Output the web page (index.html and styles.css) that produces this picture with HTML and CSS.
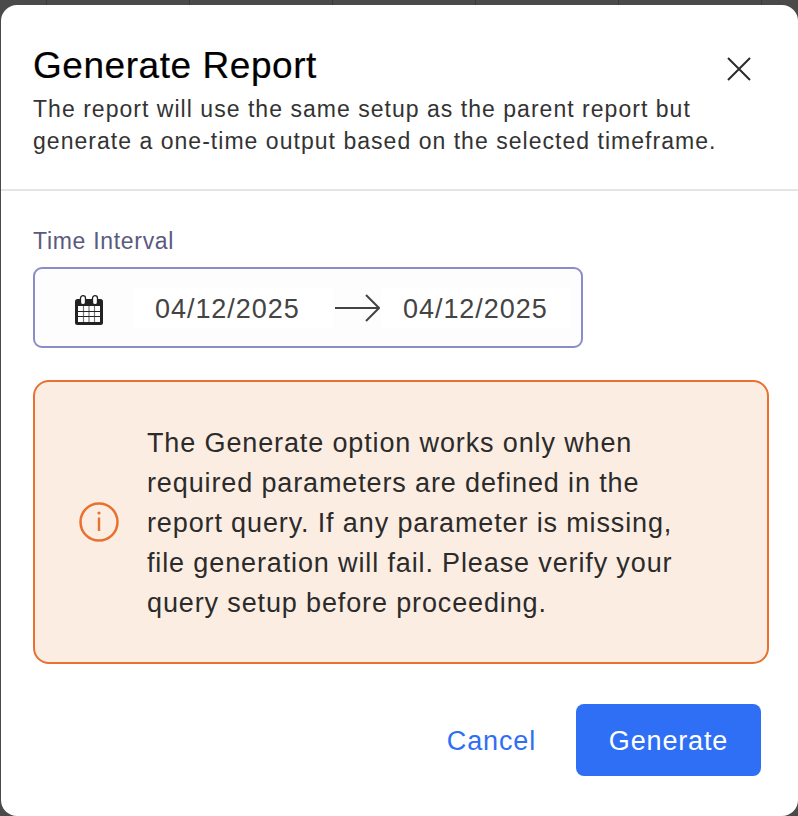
FILE: index.html
```html
<!DOCTYPE html>
<html>
    <head>
    <meta charset="utf-8">
    <title>Generate Report</title>
    <link rel="stylesheet" href="styles.css">
    </head>

    <body>
        <!-- table columns of the page behind the dialog -->
        <div class="backdrop">
            <span></span><span></span><span></span><span></span><span></span><span></span>
        </div>

        <div class="modal">
            <div class="modal-head">
                <div class="head-text">
                    <h1>Generate Report</h1>
                    <p>The report will use the same setup as the parent report but generate a one-time output based on the selected timeframe.</p>
                </div>
                <svg class="close" width="26" height="26" viewBox="0 0 26 26">
                    <path d="M2 2L24 24M24 2L2 24" stroke="#2b2b2b" stroke-width="2" fill="none"/>
                </svg>
            </div>

            <div class="modal-body">
                <label class="field-label">Time Interval</label>
                <div class="range">
                    <svg class="cal" width="28" height="30" viewBox="0 0 28 30">
                        <rect x="0" y="4" width="28" height="26" rx="2.500" fill="#222"/>
                        <rect x="5.500" y="0.700" width="5" height="9" rx="2.500" fill="#fff" stroke="#222" stroke-width="1.300"/>
                        <rect x="17.500" y="0.700" width="5" height="9" rx="2.500" fill="#fff" stroke="#222" stroke-width="1.300"/>
                        <rect x="3" y="11" width="22" height="16" fill="#fff"/>
                        <path d="M8.500 11V27M14 11V27M19.500 11V27" stroke="#777" stroke-width="1.200"/>
                        <path d="M3 16.500H25M3 21.500H25" stroke="#222" stroke-width="1.200"/>
                    </svg>
                    <span class="date date-from">04/12/2025</span>
                    <span class="arrow-box">
                        <svg width="45" height="28" viewBox="0 0 45 28">
                            <path d="M0 14H44M31 1L44 14L31 27" stroke="#444" stroke-width="2" fill="none"/>
                        </svg>
                    </span>
                    <span class="date date-to">04/12/2025</span>
                </div>

                <div class="alert">
                    <svg class="info" width="42" height="42" viewBox="0 0 42 42">
                        <circle cx="21" cy="21" r="18.500" stroke="#e9702f" stroke-width="2.500" fill="none"/>
                        <circle cx="21" cy="12" r="1.600" fill="#e9702f"/>
                        <path d="M21 16.500V30" stroke="#e9702f" stroke-width="2.400"/>
                    </svg>
                    <p>The Generate option works only when required parameters are defined in the report query. If any parameter is missing, file generation will fail. Please verify your query setup before proceeding.</p>
                </div>

                <div class="actions">
                    <button class="btn-cancel">Cancel</button>
                    <button class="btn-generate">Generate</button>
                </div>
            </div>
        </div>
    </body>
</html>
```

FILE: styles.css
```css
*{
    padding:0;
    margin:0;
    box-sizing:border-box;
}

html,body{
    height:100%;
    overflow:hidden;
}

body{
    background-color:#4a4a4a;
    font-family:"Liberation Sans",Arial,sans-serif;
    display:flex;
    flex-direction:column;
}

/*page behind the dialog, only its top strip shows*/
.backdrop{
    height:5px;
    display:flex;
    padding-left:46px;
    gap:142px;
}

.backdrop span{
    width:1px;
    height:5px;
    background-color:#3a3a3a;
}

.modal{
    margin-left:1px;
    height:811px;
    background-color:#fff;
    border-radius:16px;
}

.modal-head{
    height:186px;
    padding:41px 0 0 32px;
    display:flex;
    border-bottom:2px solid #e5e5e5;
}

.head-text{
    width:693px;
    flex-shrink:0;
}

.head-text h1{
    font-size:37px;
    line-height:40px;
    font-weight:400;
    color:#000;
    letter-spacing:0.550px;
    -webkit-text-stroke:0.200px #000;
}

.head-text p{
    margin-top:7px;
    font-size:23px;
    line-height:32px;
    color:#333;
    letter-spacing:1.030px;
}

.close{
    margin-top:10px;
    flex-shrink:0;
}

.modal-body{
    padding:37px 29px 0 32px;
}

.field-label{
    display:block;
    font-size:23px;
    line-height:26px;
    color:#5a5a7e;
    letter-spacing:0.700px;
}

.range{
    width:550px;
    height:81px;
    margin-top:13px;
    border:2px solid #8a8dc8;
    border-radius:9px;
    background-color:#fdfdfd;
    display:flex;
    align-items:center;
    padding-left:40px;
}

.cal{
    flex-shrink:0;
    margin:4px 30px 0 0;
}

.date{
    height:40px;
    line-height:42px;
    padding-left:22px;
    background-color:#fff;
    font-size:27px;
    color:#444;
    letter-spacing:0.950px;
}

.date-from{
    width:200px;
}

.date-to{
    width:190px;
}

.arrow-box{
    width:48px;
    height:40px;
    padding-left:2px;
    display:flex;
    align-items:center;
}

.alert{
    margin-top:32px;
    height:284px;
    border:2px solid #e9702f;
    border-radius:16px;
    background-color:#fcede2;
    display:flex;
    align-items:center;
    padding-left:43px;
}

.info{
    flex-shrink:0;
}

.alert p{
    width:540px;
    margin-left:27px;
    padding-top:2px;
    font-size:27px;
    line-height:40px;
    color:#2b2b2b;
    letter-spacing:0.870px;
}

.actions{
    margin-top:40px;
    padding-right:8px;
    display:flex;
    justify-content:flex-end;
    align-items:center;
}

button{
    font-family:inherit;
    border:none;
    background:none;
    font-size:27px;
    letter-spacing:0.850px;
    padding-top:2px;
}

.btn-cancel{
    color:#2f6ff5;
    margin-right:40px;
}

.btn-generate{
    width:185px;
    height:72px;
    background-color:#2f6ff5;
    color:#fff;
    border-radius:8px;
}
```
